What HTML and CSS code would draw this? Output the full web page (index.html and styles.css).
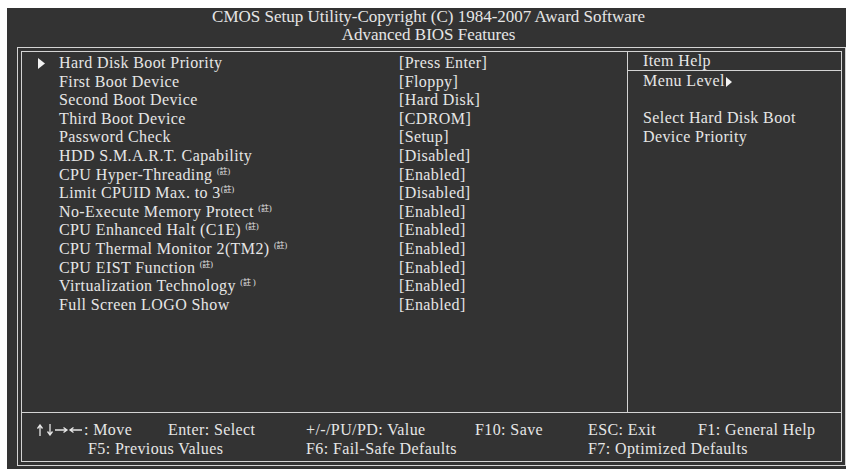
FILE: index.html
```html
<!DOCTYPE html>
<html lang="en">
<head>
    <meta charset="UTF-8">
    <meta name="viewport" content="width=device-width, initial-scale=1.0">
    <title>Advanced BIOS Features</title>
    <link rel="stylesheet" href="styles.css">
</head>
<body>
    <div class="screen">
        <div class="title">CMOS Setup Utility-Copyright (C) 1984-2007 Award Software<br>Advanced BIOS Features</div>
        <div class="frame">
            <div class="inner">
                <div class="body">
                    <div class="items">
                        <div class="row"><span class="mark"><svg width="7" height="11" viewBox="0 0 7 11"><polygon points="0,0 7,5.5 0,11" fill="#f2f2f2"/></svg></span><span>Hard Disk Boot Priority</span><span>[Press Enter]</span></div>
                        <div class="row"><span class="mark"></span><span>First Boot Device</span><span>[Floppy]</span></div>
                        <div class="row"><span class="mark"></span><span>Second Boot Device</span><span>[Hard Disk]</span></div>
                        <div class="row"><span class="mark"></span><span>Third Boot Device</span><span>[CDROM]</span></div>
                        <div class="row"><span class="mark"></span><span>Password Check</span><span>[Setup]</span></div>
                        <div class="row"><span class="mark"></span><span>HDD S.M.A.R.T. Capability</span><span>[Disabled]</span></div>
                        <div class="row"><span class="mark"></span><span>CPU Hyper-Threading <span class="note">(註)</span></span><span>[Enabled]</span></div>
                        <div class="row"><span class="mark"></span><span>Limit CPUID Max. to 3<span class="note">(註)</span></span><span>[Disabled]</span></div>
                        <div class="row"><span class="mark"></span><span>No-Execute Memory Protect <span class="note">(註)</span></span><span>[Enabled]</span></div>
                        <div class="row"><span class="mark"></span><span>CPU Enhanced Halt (C1E) <span class="note">(註)</span></span><span>[Enabled]</span></div>
                        <div class="row"><span class="mark"></span><span>CPU Thermal Monitor 2(TM2) <span class="note">(註)</span></span><span>[Enabled]</span></div>
                        <div class="row"><span class="mark"></span><span>CPU EIST Function <span class="note">(註)</span></span><span>[Enabled]</span></div>
                        <div class="row"><span class="mark"></span><span>Virtualization Technology <span class="note">(註 )</span></span><span>[Enabled]</span></div>
                        <div class="row"><span class="mark"></span><span>Full Screen LOGO Show</span><span>[Enabled]</span></div>
                    </div>
                    <div class="help">
                        <div class="help-title">Item Help</div>
                        <div class="help-text">
                            Menu Level<svg class="level" width="6" height="10" viewBox="0 0 6 10"><polygon points="0,0 6,5 0,10" fill="#f2f2f2"/></svg><br>
                            <br>
                            Select Hard Disk Boot<br>
                            Device Priority
                        </div>
                    </div>
                </div>
                <div class="keys">
                    <span><svg class="arrows" width="46" height="12" viewBox="0 0 46 12" fill="none" stroke="#e6e6e6" stroke-width="1.3">
                        <path d="M3 1.5V12M0.5 4.5L3 1 5.5 4.5"/>
                        <path d="M13 0V10.5M10.5 7.5L13 11 15.5 7.5"/>
                        <path d="M18 6H30M26.5 3.5L30 6 26.5 8.5"/>
                        <path d="M33 6H45M36.5 3.5L33 6 36.5 8.5"/>
                    </svg>: Move</span>
                    <span>Enter: Select</span>
                    <span>+/-/PU/PD: Value</span>
                    <span>F10: Save</span>
                    <span>ESC: Exit</span>
                    <span>F1: General Help</span>
                    <span class="k5">F5: Previous Values</span>
                    <span>F6: Fail-Safe Defaults</span>
                    <span class="k7">F7: Optimized Defaults</span>
                </div>
            </div>
        </div>
    </div>
</body>
</html>
```

FILE: styles.css
```css
body {
    margin: 0;
    padding: 0;
    background-color: #fff;
    font-family: "Liberation Serif", "Times New Roman", serif;
    color: #e6e6e6;
}
.screen {
    margin: 8px 0 0 7px;
    width: 839px;
    height: 461px;
    background-color: #333;
    overflow: hidden;
}
.title {
    text-align: center;
    font-size: 17px;
    line-height: 18px;
    height: 39px;
    padding-left: 4px;
}
.frame {
    margin-left: 10px;
    width: 829px;
    height: 419px;
    box-sizing: border-box;
    border: 1px solid #d4d4d4;
    padding: 3px;
}
.inner {
    height: 411px;
    box-sizing: border-box;
    border: 1px solid #d4d4d4;
    display: flex;
    flex-direction: column;
    font-size: 16px;
    letter-spacing: 0.4px;
}
.body {
    height: 360px;
    display: grid;
    grid-template-columns: 605px 1fr;
}
.items {
    padding-top: 2px;
    line-height: 18.6px;
}
.row {
    display: grid;
    grid-template-columns: 37px 340px 1fr;
    white-space: nowrap;
}
.mark {
    padding-left: 16px;
}
.mark svg {
    vertical-align: -1px;
}
.note {
    font-family: "Liberation Serif", "Noto Sans CJK TC", serif;
    font-size: 8px;
    letter-spacing: 0;
    vertical-align: 6px;
    line-height: 0;
}
.help {
    border-left: 1px solid #d4d4d4;
}
.help-title {
    height: 18px;
    line-height: 18px;
    border-bottom: 1px solid #d4d4d4;
    padding-left: 15px;
}
.help-text {
    padding: 1px 0 0 15px;
    line-height: 18.6px;
}
.level {
    vertical-align: -1px;
    margin-left: 1px;
}
.keys {
    border-top: 1px solid #d4d4d4;
    flex: 1;
    padding: 8px 0 0 15px;
    line-height: 18.5px;
    display: grid;
    grid-template-columns: 131px 138px 169px 113px 110px 1fr;
    align-content: start;
    white-space: nowrap;
}
.arrows {
    vertical-align: -1px;
    margin-right: 1px;
}
.k5 {
    grid-column: 1 / 3;
    padding-left: 51px;
}
.k7 {
    grid-column: 5 / 7;
}
```
